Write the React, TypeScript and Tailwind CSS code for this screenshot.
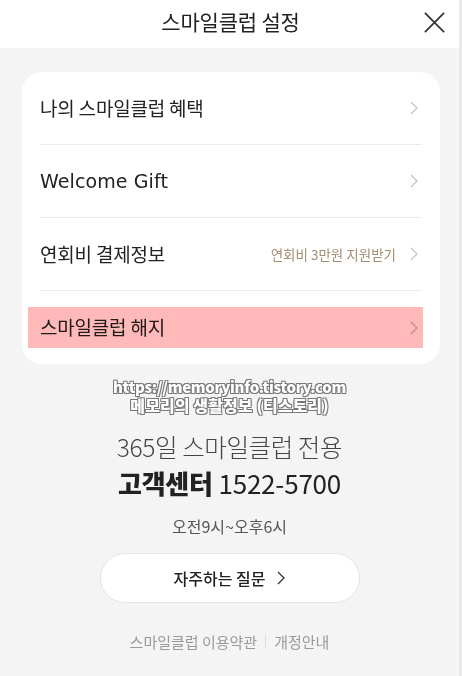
import React from 'react';

const font = { fontFamily: '"Noto Sans CJK KR", "Noto Sans", sans-serif' };

function Chevron({ className = 'text-[#c4c4c4]' }: { className?: string }) {
    return (
        <svg width="8" height="14" viewBox="0 0 8 14" fill="none" className={className}>
            <path d="M1 1l6 6-6 6" stroke="currentColor" strokeWidth="1.3" />
        </svg>
    );
}

interface RowProps {
    label: string;
    sub?: string;
    last?: boolean;
    latin?: boolean;
}

function Row({ label, sub, last, latin }: RowProps) {
    return (
        <div className={`flex items-center justify-between h-[73px] mx-[18px] ${last ? '' : 'border-b border-[#ececec]'}`}>
            <span
                className={latin ? 'text-[19px] text-[#222] font-["DejaVu_Sans"] tracking-[0.1px]' : 'text-[19px] text-[#222] tracking-[-0.2px]'}
            >
                {label}
            </span>
            <div className="flex items-center gap-[14px] pr-[4px]">
                {sub && <span className="text-[13.5px] text-[#a58c72]">{sub}</span>}
                <Chevron />
            </div>
        </div>
    );
}

export default function App() {
    return (
        <div className="w-[462px] h-[676px] bg-[#f4f4f4] flex flex-col relative overflow-hidden border-r-[3px] border-[#e9e9e9]" style={font}>
            {/* Header */}
            <header className="h-[48px] bg-white flex items-center justify-center relative">
                <h1 className="text-[21px] text-[#222] tracking-[-0.2px] pb-[4px] pl-[2px]">스마일클럽 설정</h1>
                <button className="absolute right-[13px] top-[11px]">
                    <svg width="23" height="23" viewBox="0 0 24 24" fill="none">
                        <path d="M2 2l20 20M22 2L2 22" stroke="#333" strokeWidth="1.8" />
                    </svg>
                </button>
            </header>

            {/* Card */}
            <div className="mt-[24px] ml-[22px] mr-[19px] bg-white rounded-[20px] relative">
                <Row label="나의 스마일클럽 혜택" />
                <Row label="Welcome Gift" latin />
                <Row label="연회비 결제정보" sub="연회비 3만원 지원받기" />
                <Row label="스마일클럽 해지" last />
                {/* highlight */}
                <div className="absolute left-[6px] w-[395px] top-[235px] h-[41px] bg-[#ff8a8a]/60 mix-blend-multiply pointer-events-none" />
            </div>

            {/* Watermark */}
            <div className="flex flex-col items-center mt-[13px] leading-[19px] font-black text-white [text-shadow:1px_1px_0_#777,-1px_-1px_0_#777,1px_-1px_0_#777,-1px_1px_0_#777]">
                <span className="text-[15px] tracking-[-0.3px]">https://memoryinfo.tistory.com</span>
                <span className="text-[16px] tracking-[0.1px]">메모리의 생활정보 (티스토리)</span>
            </div>

            {/* Customer center */}
            <div className="flex flex-col items-center mt-[15px]">
                <p className="text-[24.5px] font-light text-[#444] tracking-[-0.4px] leading-[34px]">365일 스마일클럽 전용</p>
                <p className="text-[26px] text-[#222] tracking-[-0.2px] leading-[36px] mt-[1px]">
                    <span className="font-black">고객센터</span> 1522-5700
                </p>
                <p className="text-[16px] text-[#555] mt-[14px] leading-[22px]">오전9시~오후6시</p>
                <button className="mt-[16px] w-[260px] h-[50px] rounded-full bg-white border border-[#e4e4e4] flex items-center justify-center gap-[12px]">
                    <span className="text-[16px] text-[#222] font-medium">자주하는 질문</span>
                    <Chevron className="text-[#333]" />
                </button>
                <div className="mt-[28px] flex items-center text-[15px] text-[#9a9a9a]">
                    <span>스마일클럽 이용약관</span>
                    <span className="mx-[8px] w-px h-[14px] bg-[#ddd]" />
                    <span>개정안내</span>
                </div>
            </div>
        </div>
    );
}
